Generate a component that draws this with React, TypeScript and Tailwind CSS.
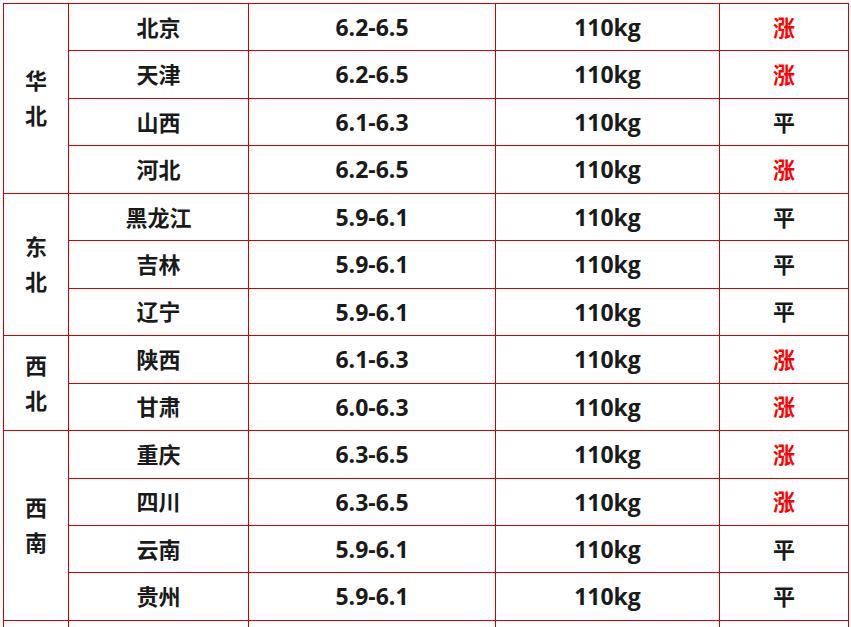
import React from "react";

type Row = { name: string; price: string; weight: string; trend: "涨" | "平" | "" };
type Group = { region: string; rows: Row[] };

const groups: Group[] = [
  {
    region: "华北",
    rows: [
      { name: "北京", price: "6.2-6.5", weight: "110kg", trend: "涨" },
      { name: "天津", price: "6.2-6.5", weight: "110kg", trend: "涨" },
      { name: "山西", price: "6.1-6.3", weight: "110kg", trend: "平" },
      { name: "河北", price: "6.2-6.5", weight: "110kg", trend: "涨" },
    ],
  },
  {
    region: "东北",
    rows: [
      { name: "黑龙江", price: "5.9-6.1", weight: "110kg", trend: "平" },
      { name: "吉林", price: "5.9-6.1", weight: "110kg", trend: "平" },
      { name: "辽宁", price: "5.9-6.1", weight: "110kg", trend: "平" },
    ],
  },
  {
    region: "西北",
    rows: [
      { name: "陕西", price: "6.1-6.3", weight: "110kg", trend: "涨" },
      { name: "甘肃", price: "6.0-6.3", weight: "110kg", trend: "涨" },
    ],
  },
  {
    region: "西南",
    rows: [
      { name: "重庆", price: "6.3-6.5", weight: "110kg", trend: "涨" },
      { name: "四川", price: "6.3-6.5", weight: "110kg", trend: "涨" },
      { name: "云南", price: "5.9-6.1", weight: "110kg", trend: "平" },
      { name: "贵州", price: "5.9-6.1", weight: "110kg", trend: "平" },
    ],
  },
];

const cell = "border border-[#d40000] text-center align-middle p-0";

export default function App() {
  return (
    <div
      className="w-[851px] h-[627px] overflow-hidden bg-white pt-[3px] pl-[3px]"
      style={{ fontFamily: '"Open Sans", "Noto Sans CJK SC", sans-serif' }}
    >
      <table className="border-collapse table-fixed w-[845px] text-[22px] font-bold text-[#1a1a1a]">
        <colgroup>
          <col className="w-[65px]" />
          <col className="w-[180px]" />
          <col className="w-[247px]" />
          <col className="w-[224px]" />
          <col className="w-[129px]" />
        </colgroup>
        <tbody>
          {groups.map((g) =>
            g.rows.map((r, i) => (
              <tr key={r.name} className="h-[47.46px]">
                {i === 0 && (
                  <td rowSpan={g.rows.length} className={cell}>
                    <div className="flex flex-col items-center leading-[35px]">
                      {g.region.split("").map((c) => (
                        <span key={c}>{c}</span>
                      ))}
                    </div>
                  </td>
                )}
                <td className={cell}>{r.name}</td>
                <td className={`${cell} text-[23px]`}>{r.price}</td>
                <td className={`${cell} text-[23px]`}>{r.weight}</td>
                <td className={`${cell} ${r.trend === "涨" ? "text-[#ff0000]" : ""}`}>{r.trend}</td>
              </tr>
            ))
          )}
          <tr className="h-[47.46px]">
            <td className={cell}></td>
            <td className={cell}></td>
            <td className={cell}></td>
            <td className={cell}></td>
            <td className={cell}></td>
          </tr>
        </tbody>
      </table>
    </div>
  );
}
